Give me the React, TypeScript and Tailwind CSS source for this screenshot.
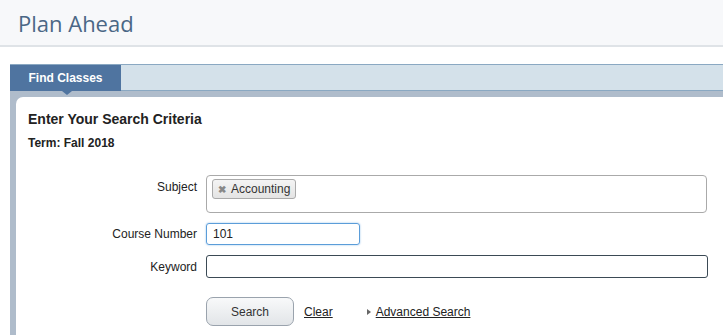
export default function App() {
  return (
    <div className="min-h-[335px] bg-white font-['Liberation_Sans',Arial,sans-serif] text-[12px] text-[#222]">
      <header className="h-[47px] border-b-2 border-[#dfe3e7] bg-[#f7f8fa] pl-[18px] pt-[8px]">
        <h1 className="font-['Open_Sans',sans-serif] text-[22px] font-medium leading-[30px] text-[#4a6786]">Plan Ahead</h1>
      </header>

      <div className="ml-[10px] mt-[17px]">
        <div className="flex h-[27px] border-y border-[#8aa8c2] bg-[#d4e1ea]">
          <div className="relative -mb-px flex w-[111px] items-center justify-center bg-[#4f74a0] text-[12px] font-bold text-white">
            Find Classes
            <span className="absolute left-[52px] top-full h-0 w-0 border-x-[5px] border-t-[4px] border-x-transparent border-t-[#4f74a0]" />
          </div>
        </div>

        <div className="bg-[#afbccb] pl-[6px] pt-[6px]">
          <div className="min-h-[240px] rounded-tl-[7px] bg-white px-3 pt-[13px]">
            <h2 className="text-[14px] font-bold leading-[18px] text-[#222]">Enter Your Search Criteria</h2>
            <p className="mt-[8px] text-[12px] font-bold leading-[14px]">Term: Fall 2018</p>

            <div className="mt-[25px] flex flex-col">
              <div className="flex items-start gap-[9px]">
                <label className="w-[169px] pt-[5px] text-right leading-[14px]">Subject</label>
                <div className="h-[38px] w-[501px] rounded-[4px] border border-[#aaa] bg-white px-[5px] pt-[3px]">
                  <span className="inline-flex h-[20px] items-center gap-[5px] rounded-[3px] border border-[#aaa] bg-gradient-to-b from-[#f4f4f4] to-[#e4e4e4] pl-[5px] pr-[5px] text-[12px] text-[#333]">
                    <span className="text-[10px] font-bold text-[#888]">✖</span>
                    Accounting
                  </span>
                </div>
              </div>

              <div className="mt-[10px] flex items-center gap-[9px]">
                <label className="w-[169px] text-right leading-[14px]">Course Number</label>
                <div className="flex h-[22px] w-[154px] items-center rounded-[3px] border border-[#5b9dd9] pl-[6px] text-[12px] shadow-[0_0_2px_#8fbde9]">
                  101
                </div>
              </div>

              <div className="mt-[10px] flex items-center gap-[9px]">
                <label className="w-[169px] text-right leading-[14px]">Keyword</label>
                <div className="h-[23px] w-[502px] rounded-[3px] border border-[#3b4a55]" />
              </div>

              <div className="mt-[19px] flex items-center pl-[178px]">
                <button className="h-[29px] w-[88px] rounded-[7px] border border-[#9aa3ad] bg-gradient-to-b from-[#f8f9fa] to-[#e2e5e8] text-[12px] text-[#333]">
                  Search
                </button>
                <a className="ml-[10px] text-[12px] text-[#222] underline">Clear</a>
                <span className="ml-[34px] h-0 w-0 border-y-[3px] border-l-[4px] border-y-transparent border-l-[#666]" />
                <a className="ml-[5px] text-[12px] text-[#222] underline">Advanced Search</a>
              </div>
            </div>
          </div>
        </div>
      </div>
    </div>
  );
}
